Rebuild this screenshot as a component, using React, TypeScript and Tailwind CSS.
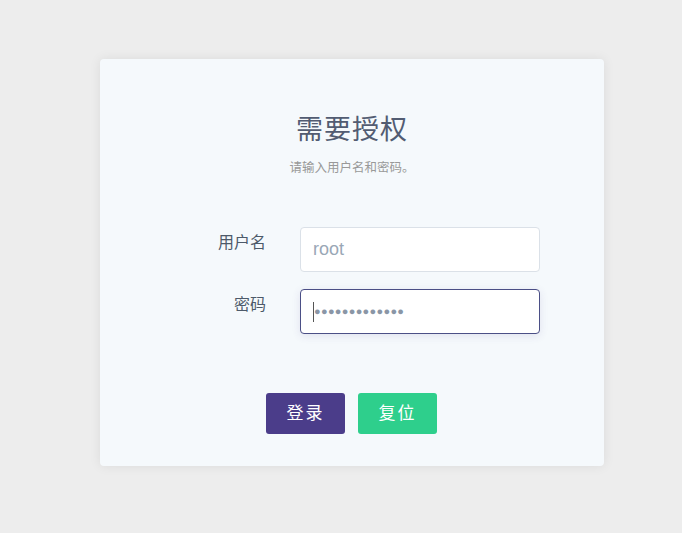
const fontStack = "font-['Liberation_Sans','Noto_Sans_CJK_SC',sans-serif]";

export default function App() {
  return (
    <div className={`min-h-screen w-full bg-[#ededed] pt-[59px] ${fontStack}`}>
      <div className="ml-[100px] w-[504px] h-[407px] rounded-[4px] bg-[#f5f9fc] shadow-[0_0_12px_rgba(0,0,0,0.08)] pt-[55px]">
        <h1 className="text-center text-[27px] leading-[32px] tracking-[1px] text-[#525c72]">需要授权</h1>
        <p className="mt-[14px] text-center text-[12.5px] leading-[16px] text-[#999]">请输入用户名和密码。</p>

        <div className="mt-[51px] mx-auto w-[374px] flex flex-col gap-[17px]">
          <div className="flex">
            <label className="w-[101px] shrink-0 pt-[7px] text-right text-[16px] leading-[18px] text-[#4d5a6a]">用户名</label>
            <input
              className="ml-[34px] w-[240px] shrink-0 h-[45px] rounded-[4px] border border-[#dbe1e8] bg-white px-[12px] text-[18px] text-[#8a9ab0] outline-none placeholder:text-[#9aa7b6]"
              placeholder="root"
            />
          </div>
          <div className="flex">
            <label className="w-[101px] shrink-0 pt-[7px] text-right text-[16px] leading-[18px] text-[#4d5a6a]">密码</label>
            <div className="ml-[34px] w-[240px] shrink-0 h-[45px] rounded-[4px] border border-[#4b4f86] bg-white px-[12px] flex items-center shadow-[0_2px_8px_rgba(75,61,138,0.12)]">
              <span className="w-px h-[20px] bg-[#555]" />
              <span className="text-[11px] tracking-[0.3px] text-[#8a96a6]">●●●●●●●●●●●●●</span>
            </div>
          </div>
        </div>

        <div className="mt-[59px] flex justify-center gap-[13px] pr-[1px]">
          <button className="w-[79px] h-[41px] rounded-[3px] bg-[#4b3d8a] text-white text-[17px] tracking-[2px]">登录</button>
          <button className="w-[79px] h-[41px] rounded-[3px] bg-[#2ecf8c] text-white text-[17px] tracking-[2px]">复位</button>
        </div>
      </div>
    </div>
  );
}
